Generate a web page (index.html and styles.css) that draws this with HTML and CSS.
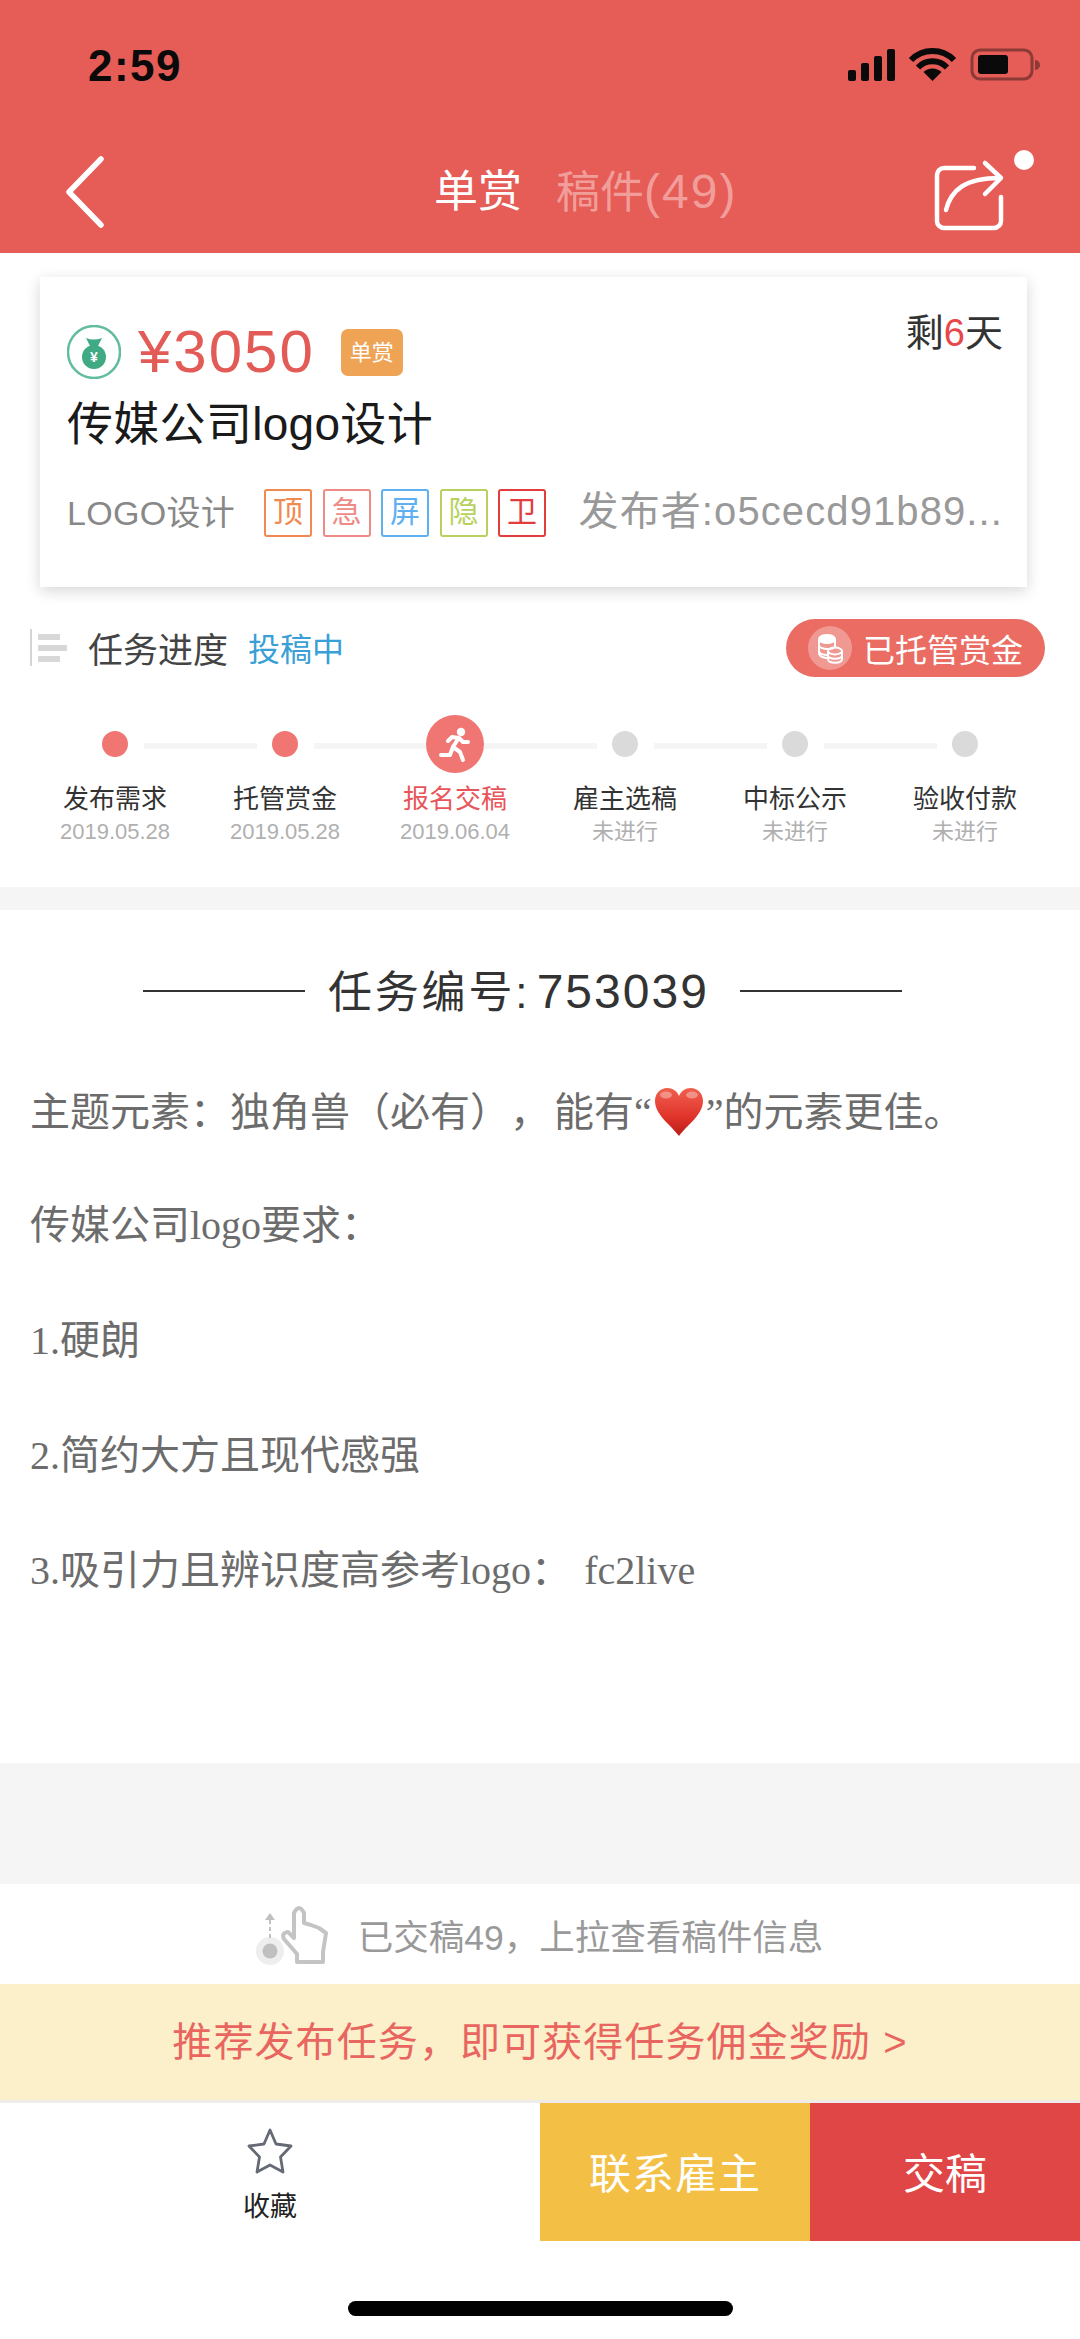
FILE: index.html
```html
<!DOCTYPE html>
<html lang="zh-CN">
<head>
<meta charset="utf-8">
<title>单赏</title>
<link rel="stylesheet" href="styles.css">
</head>
<body>
<div class="page">
  <header class="top">
    <div class="status">
      <span class="time">2:59</span>
      <svg class="status-icons" width="192" height="36" viewBox="0 0 192 36">
        <rect x="0" y="23" width="8" height="11" rx="2"/><rect x="13" y="16" width="8" height="18" rx="2"/><rect x="26" y="9" width="8" height="25" rx="2"/><rect x="39" y="2" width="8" height="32" rx="2"/>
        <path d="M63 13 a30 30 0 0 1 43 0" class="wifi"/><path d="M70 20.500 a20 20 0 0 1 29 0" class="wifi"/>
        <path d="M84.500 34 l-9 -9 a13 13 0 0 1 18 0z"/>
        <rect x="124" y="3" width="60" height="29" rx="8" class="batt"/>
        <rect x="130" y="8" width="30" height="19" rx="3"/>
        <path d="M187 13 a5 5 0 0 1 0 10z" class="nub"/>
      </svg>
    </div>
    <nav class="nav">
      <svg class="back" width="38" height="72" viewBox="0 0 38 72"><path d="M35 3 L3 36 L35 69" /></svg>
      <div class="tabs"><span class="tab-on">单赏</span><span class="tab-off">稿件<span class="tab-count">(49)</span></span></div>
      <svg class="share" width="104" height="92" viewBox="934 150 104 92">
        <path d="M975 168 H945 a7 7 0 0 0 -7 7 V221 a7 7 0 0 0 7 7 H995 a7 7 0 0 0 7 -7 V197"/>
        <path d="M986 163 L1002 178 L986 194"/>
        <path d="M947 210 C952 190 966 178 1001 178"/>
        <circle cx="1025" cy="160" r="10" class="dot"/>
      </svg>
    </nav>
  </header>

  <section class="summary">
    <div class="card">
      <div class="price-row">
        <svg class="bag" width="54" height="54" viewBox="0 0 54 54">
          <circle cx="27" cy="27" r="26" fill="#fff" stroke="#62BCA0" stroke-width="2.500"/>
          <path d="M19 13 Q27 16 35 13 L31 21 H23Z" fill="#3FAA84"/>
          <circle cx="27" cy="32" r="12" fill="#3FAA84"/>
          <text x="27" y="37" text-anchor="middle" class="bag-yen">¥</text>
        </svg>
        <span class="price">¥3050</span>
        <span class="badge">单赏</span>
        <span class="left">剩<em>6</em>天</span>
      </div>
      <h1 class="title">传媒公司logo设计</h1>
      <div class="meta">
        <span class="cat">LOGO设计</span>
        <span class="tags">
          <i class="tag t1">顶</i><i class="tag t2">急</i><i class="tag t3">屏</i><i class="tag t4">隐</i><i class="tag t5">卫</i>
        </span>
        <span class="author">发布者:o5cecd91b89...</span>
      </div>
    </div>

    <div class="prog-head">
      <svg class="prog-ico" width="38" height="38" viewBox="0 0 38 38">
        <rect x="0" y="0" width="2" height="37" fill="#d5d5d5"/>
        <rect x="8" y="5" width="22" height="6" fill="#d8d8d8"/><rect x="8" y="16" width="29" height="6" fill="#d8d8d8"/><rect x="8" y="27" width="22" height="6" fill="#d8d8d8"/>
      </svg>
      <span class="prog-label">任务进度</span>
      <span class="prog-state">投稿中</span>
      <span class="pill">
        <svg class="coins" width="44" height="44" viewBox="0 0 44 44">
          <circle cx="22" cy="22" r="22" fill="#fff" fill-opacity=".3"/>
          <g fill="none" stroke="#fff" stroke-width="2">
            <ellipse cx="19" cy="13" rx="8" ry="4" fill="#fff"/>
            <path d="M11 13 v14 c0 4 6 5 9 5"/>
            <path d="M27 13 v8"/>
            <path d="M11 19 c0 4 10 5 15 3"/>
            <path d="M11 25 c0 3 5 4 8 4"/>
            <ellipse cx="27" cy="25" rx="7" ry="3.500"/>
            <path d="M20 25 v8 c0 5 14 5 14 0 v-8"/>
            <path d="M20 29 c0 5 14 5 14 0"/>
          </g>
        </svg>
        已托管赏金
      </span>
    </div>

    <div class="track">
      <i class="node done"></i><i class="bar"></i>
      <i class="node done"></i><i class="bar"></i>
      <svg class="node-run" width="58" height="58" viewBox="0 0 58 58">
        <circle cx="29" cy="29" r="29" fill="#EF7672"/>
        <circle cx="35" cy="17" r="4.200" fill="#fff"/>
        <g fill="none" stroke="#fff" stroke-width="4" stroke-linecap="round" stroke-linejoin="round">
          <path d="M22 26 L26 22 L33 23 L37 27 L42 27"/>
          <path d="M32 24 L27 32 L34 37 L37 45"/>
          <path d="M27 32 L24 40 L15 40"/>
        </g>
      </svg>
      <i class="bar"></i>
      <i class="node"></i><i class="bar"></i>
      <i class="node"></i><i class="bar"></i>
      <i class="node"></i>
    </div>
    <ol class="steps">
      <li><b>发布需求</b><small>2019.05.28</small></li>
      <li><b>托管赏金</b><small>2019.05.28</small></li>
      <li class="current"><b>报名交稿</b><small>2019.06.04</small></li>
      <li><b>雇主选稿</b><small>未进行</small></li>
      <li><b>中标公示</b><small>未进行</small></li>
      <li><b>验收付款</b><small>未进行</small></li>
    </ol>
  </section>

  <section class="desc">
    <div class="task-no"><i class="rule"></i><span class="task-text"><span class="task-cn">任务编号</span>: <span class="task-num">753039</span></span><i class="rule"></i></div>
    <p class="lead">主题元素&#xFF1A;独角兽&#xFF08;必有&#xFF09;&#xFF0C;<span class="clause">能有</span>“<svg class="heart" width="50" height="48" viewBox="0 0 50 48"><defs><linearGradient id="hg" x1="0" y1="0" x2="0" y2="1"><stop offset="0" stop-color="#F0604E"/><stop offset=".6" stop-color="#E0342B"/><stop offset="1" stop-color="#B81E18"/></linearGradient></defs><path d="M25 48 C17 37 1 27 1 13 C1 5 7 0 13 0 C19 0 23 3 25 8 C27 3 31 0 37 0 C43 0 49 5 49 13 C49 27 33 37 25 48Z" fill="url(#hg)"/><ellipse cx="12" cy="7" rx="6" ry="3.500" fill="#fff" fill-opacity=".35"/><ellipse cx="38" cy="7" rx="6" ry="3.500" fill="#fff" fill-opacity=".35"/></svg>”的元素更佳。</p>
    <p>传媒公司logo要求&#xFF1A;</p>
    <p>1.硬朗</p>
    <p>2.简约大方且现代感强</p>
    <p>3.吸引力且辨识度高参考logo&#xFF1A;&nbsp;<span class="ref">fc2live</span></p>
  </section>

  <div class="band"></div>

  <div class="hint">
    <svg class="hand" width="78" height="65" viewBox="22 10 78 65">
      <circle cx="41" cy="59" r="14" fill="#eee"/>
      <circle cx="41" cy="59" r="7.500" fill="#c0c0c0"/>
      <path d="M41 28 V46" stroke="#c0c0c0" stroke-width="2" stroke-dasharray="4 3" fill="none"/>
      <path d="M41 21 L36 28 H46Z" fill="#c0c0c0"/>
      <path d="M68 70 V62 L55 47 Q52 41 59 40 L65 46 V21 Q70 11 75 21 V31 L82 33 L90 36 L97 41 L94 60 V70Z" fill="#fff" stroke="#c4c4c4" stroke-width="4" stroke-linejoin="round"/>
    </svg>
    <span>已交稿49&#xFF0C;上拉查看稿件信息</span>
  </div>

  <div class="promo">推荐发布任务&#xFF0C;即可获得任务佣金奖励 &gt;</div>

  <div class="actions">
    <div class="fav">
      <svg width="48" height="48" viewBox="0 0 48 48"><path d="M24 3 L30 17 L45 19 L34.500 30 L37 45 L24 38 L11 45 L13.500 30 L3 19 L18 17Z" fill="none" stroke="#666A75" stroke-width="2.800" stroke-linejoin="round"/></svg>
      <span>收藏</span>
    </div>
    <button class="btn contact">联系雇主</button>
    <button class="btn submit">交稿</button>
  </div>

  <div class="home"><i></i></div>
</div>
</body>
</html>
```
FILE: styles.css
```css
* { box-sizing: border-box; }
html, body { margin: 0; padding: 0; background: #fff; }
body { font-family: "Liberation Sans", "Noto Sans CJK SC", sans-serif; color: #333; text-spacing-trim: space-all; }
i, em { font-style: normal; }
.page { width: 1080px; height: 2339px; display: flex; flex-direction: column; overflow: hidden; }

/* header */
.top { height: 253px; background: #E65C56; flex: none; }
.status { height: 130px; margin-bottom: 2px; display: flex; align-items: center; justify-content: space-between; padding: 0 40px 0 88px; }
.time { font-size: 44px; font-weight: 700; color: #0a0a0a; letter-spacing: 1.500px; line-height: 1; margin-top: 2px; }
.status-icons { fill: #0a0a0a; }
.status-icons .wifi { fill: none; stroke: #0a0a0a; stroke-width: 6; }
.status-icons .batt { fill: none; stroke: #8c3a36; stroke-width: 3; }
.status-icons .nub { fill: #8c3a36; }
.nav { height: 120px; display: flex; align-items: center; padding-left: 66px; }
.back { flex: none; }
.back path { fill: none; stroke: #fff; stroke-width: 5.500; stroke-linecap: round; stroke-linejoin: round; }
.tabs { margin-left: 330px; display: flex; gap: 34px; font-size: 44px; line-height: 60px; }
.tab-on { color: #fff; }
.tab-off { color: #F19E9A; }
.tab-count { font-size: 48px; letter-spacing: 2px; }
.share { margin-left: auto; margin-right: 43px; margin-top: 8px; flex: none; }
.share path { fill: none; stroke: #fff; stroke-width: 4.500; stroke-linecap: round; stroke-linejoin: round; }
.share .dot { fill: #fff; }

/* summary */
.summary { height: 634px; flex: none; padding-top: 24px; }
.card { width: 987px; height: 310px; margin-left: 40px; padding: 48px 24px 0 27px; background: #fff; box-shadow: 0 4px 14px rgba(0,0,0,.16); }
.price-row { display: flex; align-items: center; height: 54px; }
.bag { flex: none; }
.bag-yen { font-size: 14px; font-weight: 700; fill: #fff; }
.price { margin-left: 17px; font-size: 60px; letter-spacing: 2px; color: #E25B56; line-height: 54px; }
.badge { margin-left: 26px; width: 62px; height: 47px; background: #EFA355; border-radius: 7px; color: #fff; font-size: 22px; line-height: 47px; text-align: center; }
.left { margin-left: auto; align-self: flex-start; margin-top: -17px; font-size: 38px; line-height: 50px; color: #333; }
.left em { color: #E8474A; }
.title { margin: 15px 0 0; font-weight: 400; font-size: 46px; letter-spacing: .300px; line-height: 60px; color: #1a1a1a; }
.meta { margin-top: 35px; height: 48px; display: flex; align-items: center; }
.cat { font-size: 34px; letter-spacing: .300px; color: #888; line-height: 48px; }
.tags { margin-left: 29px; display: flex; gap: 10.500px; }
.tag { width: 48px; height: 48px; border: 2px solid; border-radius: 3px; font-size: 30px; line-height: 42px; text-align: center; }
.t1 { color: #F08A50; border-color: #F08A50; }
.t2 { color: #EE8B86; border-color: #EE8B86; }
.t3 { color: #5FB0F0; border-color: #5FB0F0; }
.t4 { color: #B7D15C; border-color: #B7D15C; }
.t5 { color: #E23C3C; border-color: #E23C3C; }
.author { margin-left: auto; margin-top: -4px; font-size: 40px; line-height: 48px; color: #999; letter-spacing: 1.100px; white-space: nowrap; }

.prog-head { margin-top: 32px; height: 58px; display: flex; align-items: center; padding: 0 35px 0 30px; }
.prog-ico { flex: none; }
.prog-label { margin-left: 20px; margin-top: -2px; font-size: 35px; color: #444; }
.prog-state { margin-left: 20px; margin-top: -2px; font-size: 32px; color: #3A9FD6; }
.pill { margin-left: auto; height: 58px; width: 259px; padding-left: 22px; border-radius: 29px; background: #EA6C63; color: #fff; font-size: 32px; display: flex; align-items: center; gap: 11px; }

.track { margin-top: 38px; height: 58px; display: flex; align-items: center; padding-left: 102px; }
.node { width: 26px; height: 26px; border-radius: 50%; background: #DADADA; flex: none; }
.node.done { background: #EF7672; }
.node-run { flex: none; margin: 0 -16px; }
.bar { width: 113px; height: 6px; margin: 3px 15.500px 0; background: #F5F5F5; flex: none; }
.steps { list-style: none; margin: 8px 0 0; padding: 0 0 0 30px; display: grid; grid-template-columns: repeat(6, 170px); text-align: center; }
.steps li { display: flex; flex-direction: column; align-items: center; }
.steps b { font-weight: 400; font-size: 26px; line-height: 36px; color: #333; }
.steps small { margin-top: 3px; font-size: 22px; line-height: 24px; color: #b0b0b0; }
.steps .current b { color: #E8555A; }

/* description */
.desc { height: 876px; flex: none; border-top: 23px solid #F5F5F5; padding-top: 51px; }
.task-no { height: 60px; display: flex; align-items: center; gap: 23px; padding-left: 143px; color: #333; }
.task-text { font-size: 44px; margin-top: -5px; white-space: nowrap; }
.task-cn { letter-spacing: 2.800px; }
.task-num { font-size: 48px; letter-spacing: 2px; margin-left: -3px; }
.rule { width: 162px; height: 2px; background: #333; flex: none; }
.rule:last-child { margin-left: 8px; }
.desc p { margin: 0; padding-left: 30px; font-family: "Liberation Serif", "Noto Sans CJK SC", serif; font-size: 40px; line-height: 115px; height: 115px; color: #6c6c6c; white-space: nowrap; }
.desc .task-no + p { margin-top: 32px; }
.desc .lead { padding-top: 2px; }
.desc .clause { margin-left: 4px; }
.desc .ref { margin-left: 3px; }
.heart { vertical-align: -10px; margin: 0 2px; }

.band { height: 121px; background: #F5F5F5; flex: none; }
.hint { height: 100px; flex: none; display: flex; align-items: center; justify-content: center; gap: 29px; padding-right: 6px; font-size: 35.500px; color: #999; }
.hand { flex: none; }
.promo { height: 116px; flex: none; background: #FCF0CB; color: #E8665F; font-size: 40px; letter-spacing: 1.100px; line-height: 116px; text-align: center; }
.actions { height: 141px; flex: none; display: flex; border-top: 3px solid #EEEBEA; }
.fav { width: 540px; display: flex; flex-direction: column; align-items: center; padding-top: 24px; font-size: 27px; color: #222; }
.fav span { margin-top: 12px; line-height: 40px; }
.btn { width: 270px; border: 0; padding: 0 0 4px; font: inherit; font-size: 42px; color: #fff; }
.contact { background: #F3C045; letter-spacing: 1px; }
.submit { background: #E04646; }
.home { flex: 1; padding-top: 60px; }
.home i { display: block; width: 385px; height: 15px; margin-left: 348px; border-radius: 8px; background: #000; }
```
